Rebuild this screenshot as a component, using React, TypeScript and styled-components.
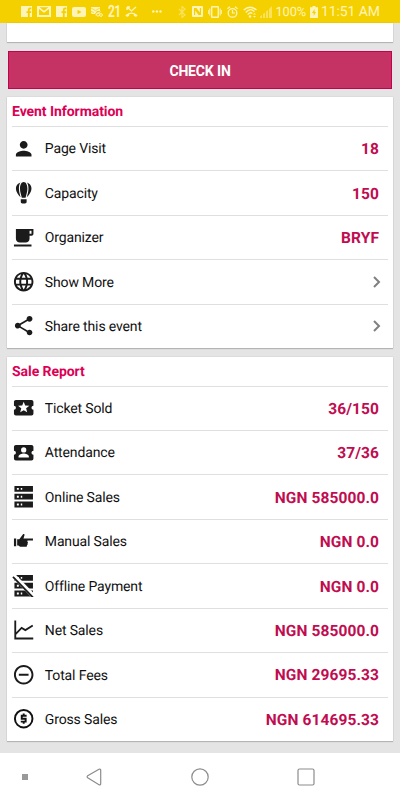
import React from "react";
import styled, { createGlobalStyle, css } from "styled-components";

const Global = createGlobalStyle`
  * { box-sizing: border-box; }
  html, body { margin: 0; padding: 0; background: #fff; }
  body {
    font-family: Roboto, "Liberation Sans", sans-serif;
    text-rendering: geometricPrecision;
    overflow: hidden;
  }
  svg { display: block; flex: none; }
`;

const Screen = styled.div`
  width: 400px;
  height: 800px;
  display: flex;
  flex-direction: column;
  overflow: hidden;
`;

const StatusBar = styled.header`
  height: 23px;
  flex: none;
  display: flex;
  align-items: center;
  padding-left: 21px;
  background: #f5d000;
  color: #fff4b8;
`;

const StatusIcon = styled.svg<{ $gap: number; $dim?: boolean }>`
  margin-right: ${(p) => p.$gap}px;
  opacity: ${(p) => (p.$dim ? 0.5 : 1)};
  fill: currentColor;
  stroke: none;
`;

const StatusText = styled.span<{ $size: number; $width: number }>`
  flex: none;
  width: ${(p) => p.$width}px;
  font-size: ${(p) => p.$size}px;
  line-height: 23px;
  padding-top: 2px;
  letter-spacing: -0.1px;
  white-space: nowrap;
`;

const DayBadge = styled.span`
  width: 17px;
  flex: none;
  font: 700 17px/23px "Roboto", sans-serif;
  letter-spacing: -1px;
  padding-top: 1px;
  transform: scaleX(0.7);
  transform-origin: left center;
`;

const Content = styled.main`
  height: 730px;
  flex: none;
  display: flex;
  flex-direction: column;
  padding: 0 7px;
  background: #e4e4e4;
`;

const cardFrame = css`
  background: #fff;
  box-shadow: 0 1px 1px rgba(0, 0, 0, 0.18), 0 0 1px rgba(0, 0, 0, 0.2);
`;

const CardEnd = styled.div`
  ${cardFrame}
  height: 19px;
  flex: none;
`;

const CheckIn = styled.button`
  height: 38.5px;
  flex: none;
  margin: 8.5px 1px 8px;
  padding: 2px 0 0;
  border: 1px solid #c4004f;
  background: #c53364;
  color: #fff;
  font: 700 14px/1 Roboto, sans-serif;
  letter-spacing: -0.15px;
`;

const Card = styled.section`
  ${cardFrame}
  flex: none;
  padding: 0 5px;
  margin-bottom: 9px;
`;

const CardTitle = styled.h2<{ $height: number }>`
  height: ${(p) => p.$height}px;
  margin: 0;
  font-size: 14px;
  font-weight: 700;
  line-height: 31px;
  letter-spacing: -0.06px;
  color: #dc0055;
`;

const Row = styled.div`
  height: 44.43px;
  display: flex;
  align-items: center;
  border-top: 1px solid #dfdfdf;
  padding-right: 9px;
`;

const RowIcon = styled.svg`
  width: 23.4px;
  height: 23.4px;
  margin: 0 9.6px 0.6px -0.2px;
  fill: #1b1b1b;
`;

const Label = styled.span`
  flex: 1;
  font-size: 14px;
  line-height: 20px;
  letter-spacing: -0.14px;
  color: #111;
  white-space: nowrap;
  padding-top: 1.5px;
`;

const Value = styled.span`
  font-size: 15.5px;
  font-weight: 700;
  line-height: 20px;
  letter-spacing: 0.1px;
  color: #c00c50;
  white-space: nowrap;
  padding-top: 1px;
`;

const Chevron = styled.svg`
  margin-right: -1.5px;
  fill: none;
  stroke: #808080;
  stroke-width: 2;
`;

const NavBar = styled.nav`
  height: 47px;
  flex: none;
  display: grid;
  grid-template-columns: 50px 88px 124px 88px;
  align-items: center;
  justify-items: center;
  background: #fff;
  svg { fill: none; stroke: #8c8c8c; stroke-width: 1.2; }
`;

const NavDot = styled.span`
  width: 6px;
  height: 6px;
  background: #999;
`;

type IconName =
  | "person" | "balloon" | "cup" | "globe" | "share" | "ticket" | "attendance"
  | "server" | "hand" | "serverOff" | "chart" | "minus" | "dollar";

const SERVER = "M2.5 1h19v6h-19zM2.5 9h19v6h-19zM2.5 17h19v6h-19z";

const ServerStack = () => (
  <>
    <path d={SERVER} />
    <path fill="#fff" d="M5 3h2v2H5zM9 3h1.500v2H9zM5 11h2v2H5zM9 11h1.500v2H9zM5 19h2v2H5zM9 19h1.500v2H9z" />
  </>
);

const TICKET =
  "M20 12c0-1.1.9-2 2-2V6c0-1.1-.9-2-2-2H4c-1.1 0-1.99.9-1.99 2v4c1.1 0 1.99.9 1.99 2s-.89 2-2 2v4c0 1.1.9 2 2 2h16c1.1 0 2-.9 2-2v-4c-1.1 0-2-.9-2-2z";

const icons: Record<IconName, React.ReactNode> = {
  person: <path d="M12 12c2.21 0 4-1.79 4-4s-1.79-4-4-4-4 1.79-4 4 1.79 4 4 4zm0 2c-2.67 0-8 1.34-8 4v2h16v-2c0-2.66-5.33-4-8-4z" />,
  balloon: (
    <>
      <path d="M12 1c2.4 0 3.8 3 3.8 6.8S14.5 14.800 13.900 17.200h-3.800C9.500 14.800 8.200 11.600 8.200 7.800S9.600 1 12 1z" />
      <path d="M8.600 1.600C7.600 3.200 7.100 5.300 7.100 7.800c0 3.500 1.100 6.500 1.700 8.800C6.500 14.500 4 11.500 4 7.800c0-2.900 1.800-5.200 4.600-6.200zM15.400 1.600c1 1.600 1.500 3.700 1.500 6.200 0 3.500-1.100 6.500-1.700 8.800C17.500 14.500 20 11.500 20 7.800c0-2.900-1.800-5.200-4.600-6.200z" />
      <path d="M9 18.700h6v2.500c0 1-.7 1.800-1.700 1.800h-2.600c-1 0-1.700-.8-1.700-1.800z" />
    </>
  ),
  cup: <path d="M22 3H4v10c0 2.210 1.790 4 4 4h6c2.210 0 4-1.790 4-4v-3h2c1.110 0 2-.89 2-2zm-2 5h-2V5h2v3zM2 21h18v-2H2v2z" />,
  globe: <path d="M11.990 2C6.470 2 2 6.480 2 12s4.470 10 9.990 10C17.520 22 22 17.520 22 12S17.520 2 11.990 2zm6.930 6h-2.950c-.32-1.250-.78-2.450-1.380-3.560 1.840.63 3.370 1.910 4.330 3.560zM12 4.040c.83 1.200 1.480 2.530 1.910 3.960h-3.820c.43-1.430 1.080-2.760 1.910-3.960zM4.260 14C4.100 13.360 4 12.690 4 12s.1-1.360.26-2h3.380c-.08.66-.14 1.320-.14 2s.06 1.340.14 2H4.260zm.82 2h2.950c.32 1.250.78 2.450 1.380 3.560-1.840-.63-3.370-1.900-4.330-3.560zm2.950-8H5.080c.96-1.660 2.490-2.930 4.330-3.560C8.810 5.550 8.350 6.750 8.030 8zM12 19.960c-.83-1.200-1.480-2.530-1.910-3.960h3.820c-.43 1.430-1.080 2.760-1.910 3.960zM14.340 14H9.660c-.09-.66-.16-1.320-.16-2s.07-1.350.16-2h4.680c.09.65.16 1.320.16 2s-.07 1.340-.16 2zm.25 5.560c.6-1.110 1.060-2.310 1.380-3.560h2.950c-.96 1.650-2.490 2.930-4.330 3.560zM16.360 14c.08-.66.14-1.320.14-2s-.06-1.340-.14-2h3.380c.16.640.26 1.310.26 2s-.1 1.360-.26 2h-3.380z" />,
  share: <path d="M18 16.080c-.76 0-1.440.3-1.960.77L8.910 12.700c.05-.23.09-.46.09-.7s-.04-.47-.09-.7l7.050-4.110c.54.5 1.250.81 2.040.81 1.660 0 3-1.340 3-3s-1.340-3-3-3-3 1.340-3 3c0 .24.04.47.09.7L8.040 9.810C7.500 9.310 6.790 9 6 9c-1.660 0-3 1.340-3 3s1.340 3 3 3c.79 0 1.500-.31 2.040-.81l7.120 4.160c-.05.21-.08.43-.08.65 0 1.610 1.310 2.920 2.920 2.920s2.920-1.310 2.920-2.920-1.310-2.920-2.920-2.920z" />,
  ticket: (
    <>
      <path d={TICKET} />
      <path fill="#fff" d="M15.580 16.800L12 14.500l-3.580 2.300 1.080-4.120-3.290-2.690 4.240-.25L12 5.800l1.540 3.950 4.240.25-3.290 2.690z" />
    </>
  ),
  attendance: (
    <>
      <path d={TICKET} />
      <circle cx="12" cy="9.200" r="2.700" fill="#fff" />
      <path fill="#fff" d="M6.700 16.900v-1c0-2 3.500-3 5.300-3s5.300 1 5.300 3v1z" />
    </>
  ),
  server: <ServerStack />,
  hand: (
    <path d="M2 8.800h2.300v8H2zM5.300 9.500H7.500L11.300 4.300c.8-.8 2 .2 1.500 1.200l-1 3.100H21.500v2.200h-5.700v1.300c.8.5.7 1.500.1 1.800.4.700.1 1.500-.6 1.700.3.900-.3 1.700-1.300 1.700H8.300L6.600 16H5.300z" />
  ),
  serverOff: (
    <>
      <ServerStack />
      <path d="M1 1L22.800 23.500" stroke="#fff" strokeWidth="4.600" />
      <path d="M1 3L21.500 24" stroke="#1b1b1b" strokeWidth="1.800" />
    </>
  ),
  chart: <path d="M2.400 2.500h1.900v12.200L9.700 9l4 2.400L20.800 7l1 1.500-8.100 5.200-3.700-2.300-5.700 5.900v2.700h17.500v2H2.400z" />,
  minus: <path d="M7 11v2h10v-2H7zm5-9C6.480 2 2 6.480 2 12s4.480 10 10 10 10-4.480 10-10S17.520 2 12 2zm0 18c-4.410 0-8-3.590-8-8s3.590-8 8-8 8 3.590 8 8-3.590 8-8 8z" />,
  dollar: (
    <g fill="none" stroke="#111" strokeWidth="2">
      <circle cx="12" cy="12" r="9" />
      <path d="M15 9H10v3h4v3H9M12 6.700V9M12 15v2.300" />
    </g>
  ),
};

type Item = { icon: IconName; label: string; value?: string };

const eventItems: Item[] = [
  { icon: "person", label: "Page Visit", value: "18" },
  { icon: "balloon", label: "Capacity", value: "150" },
  { icon: "cup", label: "Organizer", value: "BRYF" },
  { icon: "globe", label: "Show More" },
  { icon: "share", label: "Share this event" },
];

const saleItems: Item[] = [
  { icon: "ticket", label: "Ticket Sold", value: "36/150" },
  { icon: "attendance", label: "Attendance", value: "37/36" },
  { icon: "server", label: "Online Sales", value: "NGN 585000.0" },
  { icon: "hand", label: "Manual Sales", value: "NGN 0.0" },
  { icon: "serverOff", label: "Offline Payment", value: "NGN 0.0" },
  { icon: "chart", label: "Net Sales", value: "NGN 585000.0" },
  { icon: "minus", label: "Total Fees", value: "NGN 29695.33" },
  { icon: "dollar", label: "Gross Sales", value: "NGN 614695.33" },
];

const InfoRow = ({ icon, label, value }: Item) => (
  <Row>
    <RowIcon viewBox="0 0 24 24">{icons[icon]}</RowIcon>
    <Label>{label}</Label>
    {value ? (
      <Value>{value}</Value>
    ) : (
      <Chevron width="8" height="12" viewBox="0 0 8 12"><path d="M1 1l5 5-5 5" /></Chevron>
    )}
  </Row>
);

const FacebookIcon = ({ gap }: { gap: number }) => (
  <StatusIcon $gap={gap} width="11" height="11" viewBox="0 0 11 11">
    <path d="M0 0h11v11H8.700V7h1.500V5.200H8.700V4q0-.8.800-.8h.9V1.500H9Q6.900 1.500 6.900 3.700v1.500H5.500V7h1.400v4H0z" />
  </StatusIcon>
);

const StatusIcons = () => (
  <>
    <FacebookIcon gap={5} />
    <StatusIcon $gap={5} width="14" height="11" viewBox="0 0 14 11">
      <path fillRule="evenodd" d="M0 0h14v11H0zM2 3v6h10V3L7 6.800zM2.500 1.300L7 4.800l4.500-3.500z" />
    </StatusIcon>
    <FacebookIcon gap={5} />
    <StatusIcon $gap={5} width="14" height="10" viewBox="0 0 14 10">
      <path fillRule="evenodd" d="M2 0h10q2 0 2 2v6q0 2-2 2H2Q0 10 0 8V2Q0 0 2 0zM5.500 2.800v4.400L9.500 5z" />
    </StatusIcon>
    <StatusIcon $gap={5} width="12" height="11" viewBox="0 0 12 11">
      <path d="M0 1h9v4H6L4 8H1L0 7z" />
      <path d="M0 2l4.500 2.500L9 2M0 5.500l3 1" fill="none" stroke="#f5d000" strokeWidth=".7" />
      <path d="M4.500 9l5-3.500" fill="none" stroke="#fff4b8" strokeWidth="1" />
      <circle cx="7" cy="8.500" r="1.600" fill="none" stroke="#fff4b8" />
      <circle cx="10" cy="9" r="1.400" fill="none" stroke="#fff4b8" />
    </StatusIcon>
    <DayBadge>21</DayBadge>
    <StatusIcon $gap={14} width="13" height="11" viewBox="0 0 13 11">
      <path d="M2 1v3M2 1h3M2 1l4.500 4L11 1" fill="none" stroke="#fff4b8" strokeWidth="1.300" />
      <path d="M.3 9.200Q6.500 3.800 12.700 9.200L11 11 8.800 9.700V8.200Q6.500 7.500 4.200 8.200v1.500L2 11z" />
    </StatusIcon>
    <StatusIcon $gap={16} width="10" height="3" viewBox="0 0 10 3">
      <circle cx="1.300" cy="1.500" r="1.200" /><circle cx="4.900" cy="1.500" r="1.200" /><circle cx="8.500" cy="1.500" r="1.200" />
    </StatusIcon>
    <StatusIcon $gap={6} $dim width="8" height="12" viewBox="0 0 8 12">
      <path d="M1 3l6 6-3 2.500V.5L7 3 1 9" fill="none" stroke="#fff4b8" strokeWidth="1.200" />
    </StatusIcon>
    <StatusIcon $gap={5} width="11" height="11" viewBox="0 0 11 11">
      <path fillRule="evenodd" d="M1 0h9q1 0 1 1v9q0 1-1 1H1q-1 0-1-1V1q0-1 1-1zM2 2v7h1.200V4.500L6.500 9H9V2H7.800v4.500L4.500 2z" />
    </StatusIcon>
    <StatusIcon $gap={5} width="14" height="12" viewBox="0 0 14 12">
      <path fillRule="evenodd" d="M4 0h6q1 0 1 1v10q0 1-1 1H4q-1 0-1-1V1q0-1 1-1zM4.400 1.500v9h5.200v-9zM1.300 2.500h1v7h-1zM11.700 2.500h1v7h-1zM0 4h.8v4H0zM13.200 4h.8v4h-.8z" />
    </StatusIcon>
    <StatusIcon $gap={5} width="11" height="12" viewBox="0 0 11 12">
      <path d="M.4 2.800L3 .7M10.600 2.800L8 .7M5.500 4v3H8" fill="none" stroke="#fff4b8" strokeWidth="1.200" />
      <circle cx="5.500" cy="6.900" r="4.300" fill="none" stroke="#fff4b8" strokeWidth="1.300" />
    </StatusIcon>
    <StatusIcon $gap={2} width="15" height="12" viewBox="0 0 15 12">
      <path d="M.7 4Q7-1.500 13.500 4M2.700 6.500Q7 1.500 11.500 5.500M4.700 8.700Q7 5.500 9.300 7.500" fill="none" stroke="#fff4b8" strokeWidth="1.300" />
      <circle cx="7" cy="10.500" r="1.200" /><path d="M10 8.500L11.500 7 13 8.500zM10 10l1.500 1.500L13 10z" />
    </StatusIcon>
    <StatusIcon $gap={3.5} $dim width="12" height="12" viewBox="0 0 12 12">
      <path d="M0 12v-1.500L2 9v3zM3 12V8l2-1.500V12zM6 12V5.500L8 4v8zM9 12V3l3-3v12z" />
    </StatusIcon>
  </>
);

export default function App() {
  return (
    <>
      <Global />
      <Screen>
        <StatusBar>
          <StatusIcons />
          <StatusText $size={12.8} $width={34.5}>100%</StatusText>
          <StatusIcon $gap={3} width="8" height="12" viewBox="0 0 8 12">
            <path fillRule="evenodd" d="M2.500 0h3v1.300H8V12H0V1.300h2.500zM4.600 3L2 7h1.700v3L6 6H4.600z" />
          </StatusIcon>
          <StatusText $size={14} $width={62}>11:51 AM</StatusText>
        </StatusBar>
        <Content>
          <CardEnd />
          <CheckIn>CHECK IN</CheckIn>
          <Card>
            <CardTitle $height={29}>Event Information</CardTitle>
            {eventItems.map((item) => <InfoRow key={item.label} {...item} />)}
          </Card>
          <Card>
            <CardTitle $height={28.5}>Sale Report</CardTitle>
            {saleItems.map((item) => <InfoRow key={item.label} {...item} />)}
          </Card>
        </Content>
        <NavBar>
          <NavDot />
          <svg width="16" height="18" viewBox="0 0 16 18"><path d="M13 1.200L1.700 7.800q-1.200 1 0 2L13 16.800q1.700.6 1.700-1V2.200q0-1.600-1.700-1z" /></svg>
          <svg width="18" height="18" viewBox="0 0 18 18"><circle cx="9" cy="9" r="8.200" /></svg>
          <svg width="18" height="18" viewBox="0 0 18 18"><rect x="1" y="1" width="16" height="16" rx="1.500" /></svg>
        </NavBar>
      </Screen>
    </>
  );
}
